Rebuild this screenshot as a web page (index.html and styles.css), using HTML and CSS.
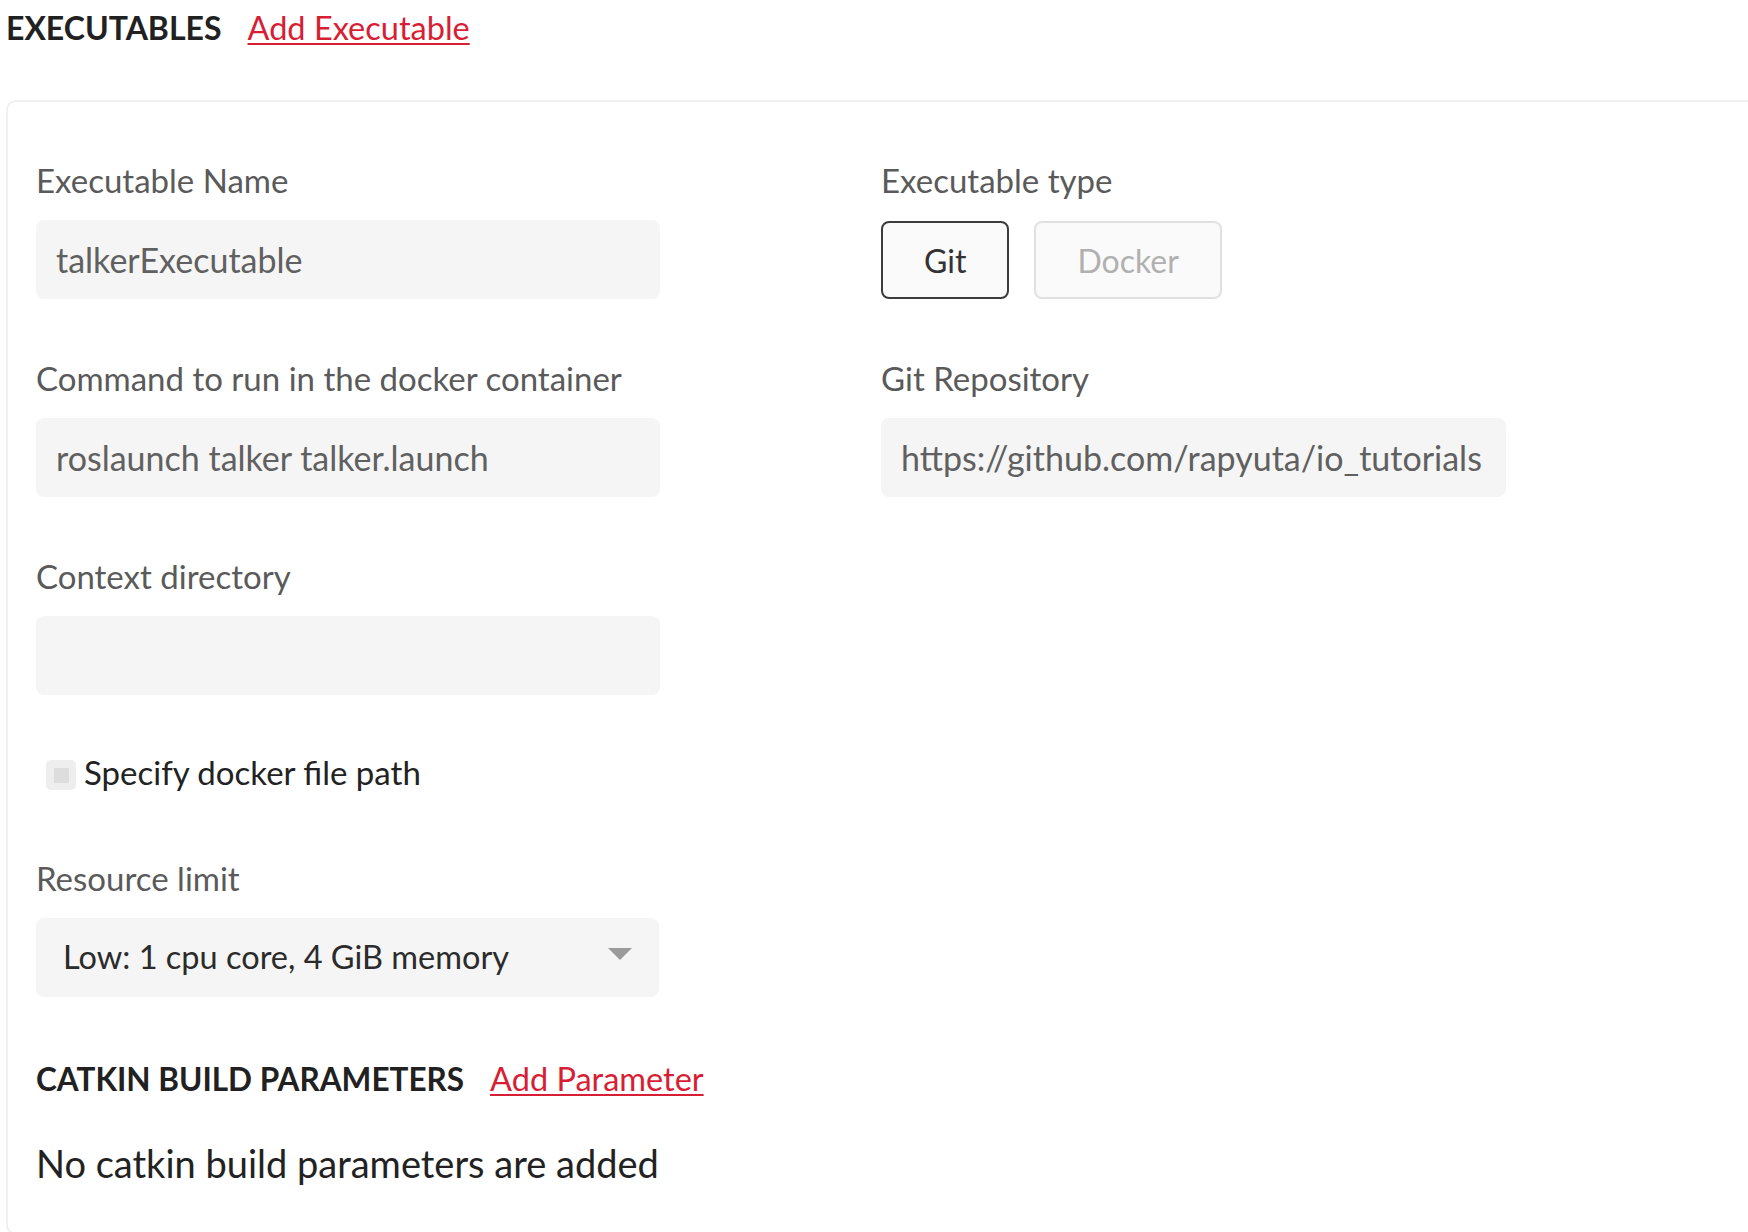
FILE: index.html
```html
<!DOCTYPE html>
<html lang="en">
<head>
<meta charset="utf-8">
<title>Executables</title>
<link rel="stylesheet" href="styles.css">
</head>
<body>
<div class="page">
  <div class="section-head">
    <h2 class="section-title">EXECUTABLES</h2>
    <a class="red-link" href="#">Add Executable</a>
  </div>

  <div class="card">
    <div class="form-grid">
      <div class="col">
        <div class="field">
          <label class="label">Executable Name</label>
          <div class="input">talkerExecutable</div>
        </div>
        <div class="field">
          <label class="label">Command to run in the docker container</label>
          <div class="input">roslaunch talker talker.launch</div>
        </div>
        <div class="field">
          <label class="label">Context directory</label>
          <div class="input"></div>
        </div>
        <div class="check-row">
          <span class="checkbox"><span class="checkbox-inner"></span></span>
          <span class="check-label">Specify docker file path</span>
        </div>
        <div class="field field-resource">
          <label class="label">Resource limit</label>
          <div class="select">
            <span class="select-text">Low: 1 cpu core, 4 GiB memory</span>
            <svg class="select-arrow" width="24" height="12" viewBox="0 0 24 12"><polygon points="0,0 24,0 12,12" fill="#9b9b9b"/></svg>
          </div>
        </div>
      </div>
      <div class="col">
        <div class="field">
          <label class="label">Executable type</label>
          <div class="toggle-group">
            <button class="toggle toggle-active">Git</button>
            <button class="toggle toggle-disabled">Docker</button>
          </div>
        </div>
        <div class="field">
          <label class="label">Git Repository</label>
          <div class="input input-wide">https://github.com/rapyuta/io_tutorials</div>
        </div>
      </div>
    </div>

    <div class="sub-head">
      <h3 class="sub-title">CATKIN BUILD PARAMETERS</h3>
      <a class="red-link" href="#">Add Parameter</a>
    </div>
    <p class="empty-text">No catkin build parameters are added</p>
  </div>
</div>
</body>
</html>
```
FILE: styles.css
```css
html, body {
  margin: 0;
  padding: 0;
  overflow: hidden;
  background: #ffffff;
}

body {
  font-family: "Lato", "Roboto", sans-serif;
  color: #222222;
}

.page {
  padding: 8px 0 0 6px;
}

.section-head {
  display: flex;
  align-items: baseline;
  gap: 26px;
  height: 40px;
  line-height: 40px;
}

.section-title {
  margin: 0;
  font-size: 32px;
  font-weight: 700;
  color: #212121;
  line-height: 40px;
}

.red-link {
  font-size: 32.5px;
  color: #d71e34;
  text-decoration: underline;
  text-decoration-thickness: 2px;
  text-underline-offset: 3px;
  line-height: 40px;
}

.card {
  margin-top: 52px;
  margin-right: -60px;
  border: 2px solid #f0f0f0;
  border-radius: 10px;
  padding: 58px 0 47px 28px;
}

.form-grid {
  display: grid;
  grid-template-columns: 624px 625px;
  column-gap: 221px;
}

.col {
  display: flex;
  flex-direction: column;
}

.field {
  display: flex;
  flex-direction: column;
  margin-bottom: 59px;
}

.label {
  font-size: 33px;
  line-height: 40px;
  height: 40px;
  color: #5a5a5a;
  margin-bottom: 20px;
  white-space: nowrap;
}

.input {
  height: 79px;
  box-sizing: border-box;
  background: #f5f5f5;
  border-radius: 8px;
  padding: 0 20px;
  font-size: 34px;
  line-height: 79px;
  color: #606060;
  white-space: nowrap;
  overflow: hidden;
}

.toggle-group {
  display: flex;
  gap: 25px;
  margin-top: 1px;
}

.toggle {
  height: 78px;
  box-sizing: border-box;
  padding: 0 41px;
  font-family: "Lato", "Roboto", sans-serif;
  font-size: 32px;
  border-radius: 8px;
  background: #fafafa;
  cursor: pointer;
}

.toggle-active {
  border: 2px solid #3c3c3c;
  color: #333333;
}

.toggle-disabled {
  border: 2px solid #e0e0e0;
  color: #b0b0b0;
}

.check-row {
  display: flex;
  align-items: flex-start;
  height: 40px;
  margin-top: -2px;
  margin-bottom: 66px;
}

.checkbox {
  width: 30px;
  height: 30px;
  margin: 8px 8px 0 10px;
  background: #eeeeee;
  border-radius: 5px;
  display: flex;
  align-items: center;
  justify-content: center;
}

.checkbox-inner {
  width: 15px;
  height: 15px;
  background: #dddddd;
}

.check-label {
  font-size: 33px;
  line-height: 40px;
  color: #222222;
}

.field-resource {
  margin-bottom: 0;
}

.select {
  height: 79px;
  box-sizing: border-box;
  background: #f5f5f5;
  border-radius: 8px;
  padding: 0 27px;
  display: flex;
  align-items: center;
  justify-content: space-between;
  width: 623px;
}

.select-text {
  font-size: 32.5px;
  color: #2b2b2b;
  line-height: 79px;
  margin-top: -3px;
}

.select-arrow {
  margin-bottom: 7px;
}

.sub-head {
  display: flex;
  align-items: baseline;
  gap: 26px;
  margin-top: 62px;
  height: 40px;
}

.sub-title {
  margin: 0;
  font-size: 31.5px;
  font-weight: 700;
  color: #212121;
  line-height: 40px;
}

.empty-text {
  margin: 41px 0 0 0;
  font-size: 38px;
  line-height: 46px;
  color: #222222;
}
```
